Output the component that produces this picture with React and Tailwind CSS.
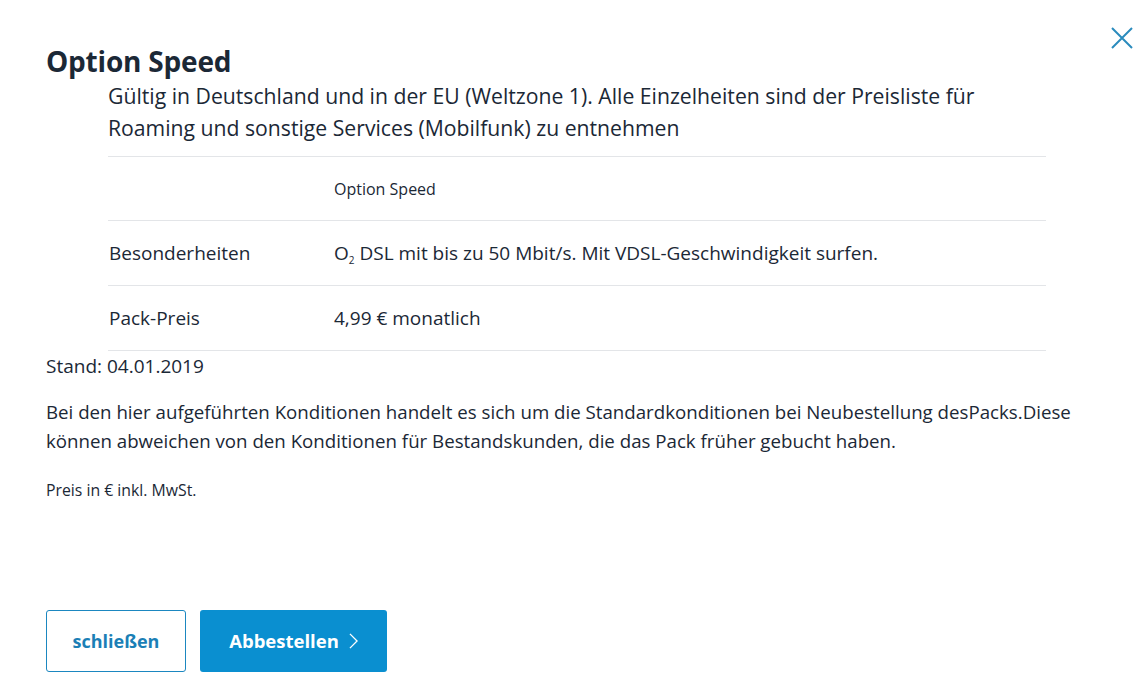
import React from "react";

const rows = [
  { label: "Besonderheiten", value: "dsl" },
  { label: "Pack-Preis", value: "4,99 € monatlich" },
];

const App = () => {
  return (
    <div className="relative min-h-[699px] bg-white text-[#1b2836] font-['Open_Sans',sans-serif]">
      {/* Schließen-Icon */}
      <button className="absolute right-[14px] top-[26px] w-[24px] h-[24px] text-[#2a8bbd]" aria-label="close">
        <svg viewBox="0 0 24 24" className="w-full h-full" fill="none" stroke="currentColor" strokeWidth="2">
          <path d="M2 2l20 20M22 2L2 22" />
        </svg>
      </button>

      <div className="pl-[46px] pr-[102px] pt-[41px]">
        <h2 className="text-[28px] leading-[40px] font-bold tracking-[-0.2px]">Option Speed</h2>

        <div className="pl-[62px]">
          <p className="text-[21.2px] leading-[32px] -mt-[1px]">
            Gültig in Deutschland und in der EU (Weltzone 1). Alle Einzelheiten sind der Preisliste für
            <br />
            Roaming und sonstige Services (Mobilfunk) zu entnehmen
          </p>

          <div className="mt-[12px] border-t border-[#e3e5e8]">
            <div className="flex h-[64px] items-center border-b border-[#e3e5e8]">
              <div className="w-[226px]" />
              <div className="text-[16px]">Option Speed</div>
            </div>
            {rows.map((r) => (
              <div key={r.label} className="flex h-[65px] items-center border-b border-[#e3e5e8] text-[19px]">
                <div className="w-[226px] pl-[1px]">{r.label}</div>
                <div>
                  {r.value === "dsl" ? (
                    <>
                      O<sub className="text-[10px] align-[-2px]">2</sub> DSL mit bis zu 50 Mbit/s. Mit VDSL-Geschwindigkeit surfen.
                    </>
                  ) : (
                    r.value
                  )}
                </div>
              </div>
            ))}
          </div>
        </div>

        <p className="text-[19px] leading-[30px]">Stand: 04.01.2019</p>

        <p className="mt-[16px] text-[18.7px] leading-[29px] whitespace-nowrap">
          Bei den hier aufgeführten Konditionen handelt es sich um die Standardkonditionen bei Neubestellung desPacks.Diese
          <br />
          können abweichen von den Konditionen für Bestandskunden, die das Pack früher gebucht haben.
        </p>

        <p className="mt-[25px] text-[15.8px] leading-[20px]">Preis in € inkl. MwSt.</p>

        <div className="mt-[110px] flex gap-[14px]">
          <button className="w-[140px] h-[62px] rounded-[3px] border border-[#1b87c0] bg-white text-[#1b7fb6] text-[18px] font-bold">
            schließen
          </button>
          <button className="w-[187px] h-[62px] rounded-[3px] bg-[#0a8fd0] text-white text-[18.5px] font-bold flex items-center justify-center gap-[10px]">
            Abbestellen
            <svg viewBox="0 0 10 18" className="w-[9px] h-[16px]" fill="none" stroke="currentColor" strokeWidth="1.5">
              <path d="M1 1l8 8-8 8" />
            </svg>
          </button>
        </div>
      </div>
    </div>
  );
};

export default App;
